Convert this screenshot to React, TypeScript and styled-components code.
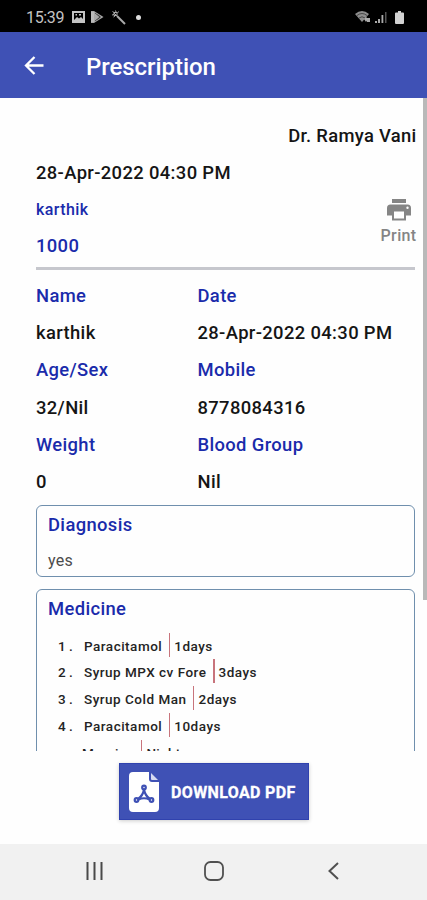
import React from "react";
import styled, { createGlobalStyle } from "styled-components";

const GlobalStyle = createGlobalStyle`
  * { box-sizing: border-box; }
  body { margin: 0; background: #fff; font-family: Roboto, "Liberation Sans", sans-serif; }
  svg { display: block; }
`;

const Screen = styled.div`
  width: 427px;
  height: 900px;
  display: flex;
  flex-direction: column;
  background: #fefefe;
  overflow: hidden;
  white-space: nowrap;
`;

const StatusBar = styled.div`
  height: 32px;
  flex: none;
  display: flex;
  align-items: center;
  justify-content: space-between;
  padding: 2px 23px 0 26px;
  background: #000;
  color: #c4c4c4;
`;

const StatusGroup = styled.div<{ $gap: number }>`
  display: flex;
  align-items: center;
  gap: ${(p) => p.$gap}px;
`;

const Clock = styled.span`
  font-size: 16px;
  letter-spacing: -0.35px;
  margin-right: 1px;
`;

const Dot = styled.i`
  width: 5px;
  height: 5px;
  margin-left: 4px;
  border-radius: 50%;
  background: #ddd;
`;

const AppBar = styled.header`
  height: 66px;
  flex: none;
  display: flex;
  align-items: center;
  padding-left: 24px;
  gap: 42px;
  background: #3f51b5;
  color: #fff;
`;

const Title = styled.h1`
  margin: 0;
  padding-top: 4px;
  font-size: 24px;
  line-height: 28px;
  font-weight: 500;
  letter-spacing: -0.05px;
`;

const Viewport = styled.main`
  height: 653px;
  flex: none;
  display: flex;
  overflow: hidden;
`;

const Content = styled.div`
  width: 379px;
  flex: none;
  margin: 19px 8px 0 36px;
`;

const ScrollThumb = styled.div`
  width: 4px;
  height: 502px;
  background: #b9b9b9;
`;

const Line = styled.div<{ $h?: number; $size?: number; $spacing?: number; $color?: string; $right?: boolean }>`
  height: ${(p) => p.$h ?? 37.33}px;
  line-height: ${(p) => p.$h ?? 37.33}px;
  font-size: ${(p) => p.$size ?? 18.4}px;
  letter-spacing: ${(p) => p.$spacing ?? 0.36}px;
  font-weight: 500;
  color: ${(p) => p.$color ?? "#151515"};
  ${(p) => p.$right && "display: flex; justify-content: flex-end; margin-right: -1.5px;"}
`;

const Summary = styled.section`
  display: flex;
  justify-content: space-between;
  height: 113px;
`;

const PrintButton = styled.button`
  display: flex;
  flex-direction: column;
  align-items: center;
  align-self: flex-start;
  margin: 45px -1.5px 0 0;
  padding: 0;
  border: 0;
  background: none;
  color: #858585;
  font: 500 16px/20px Roboto, sans-serif;
  letter-spacing: 0.35px;
  gap: 5px;
`;

const Divider = styled.hr`
  height: 3px;
  margin: 0 0 6.5px;
  border: 0;
  background: #c6c7cd;
`;

const Details = styled.section`
  display: grid;
  grid-template-columns: 161.5px 1fr;
`;

const Panel = styled.section<{ $height: number }>`
  height: ${(p) => p.$height}px;
  margin-bottom: 12px;
  padding: 5px 11px;
  border: 1px solid #6f8fad;
  border-radius: 6px;
`;

const Panels = styled.div`
  padding-top: 4.5px;
`;

const Diagnosis = styled.p`
  margin: 7px 0 0;
  color: #4c4c4c;
  font-size: 16px;
  line-height: 30px;
  letter-spacing: 0.25px;
`;

const MedicineList = styled.div`
  padding: 9px 0 0 10px;
`;

const Medicine = styled.div<{ $schedule?: boolean }>`
  display: flex;
  align-items: center;
  height: 26.75px;
  margin-left: ${(p) => (p.$schedule ? -2 : 0)}px;
  color: #242424;
  font-size: 13.5px;
  font-weight: 500;
  letter-spacing: ${(p) => (p.$schedule ? 0.3 : 0.5)}px;
`;

const Index = styled.span`
  width: 26px;
  word-spacing: -1px;
`;

const Separator = styled.i`
  width: 1.5px;
  height: 24px;
  margin: -2px 4px 0 6.5px;
  background: #c8747c;
`;

const Footer = styled.footer`
  height: 93px;
  flex: none;
  padding: 12px 0 0 119px;
`;

const Download = styled.button`
  width: 190px;
  height: 57px;
  display: flex;
  align-items: center;
  gap: 12px;
  padding: 0 0 0 10px;
  border: 0;
  background: #3f51b5;
  box-shadow: inset 0 0 0 1px #3042ae, 0 1px 4px #0003;
  color: #fff;
  font: 700 16px/20px Roboto, sans-serif;
  white-space: nowrap;
`;

const DownloadLabel = styled.span`
  padding-top: 2px;
  letter-spacing: 0.36px;
  -webkit-text-stroke: 0.3px #fff;
`;

const NavBar = styled.nav`
  height: 56px;
  flex: none;
  display: grid;
  grid-template-columns: repeat(3, 119.5px);
  align-items: center;
  justify-items: center;
  padding: 0 0 2px 35px;
  background: #f1f1f1;
`;

const BLUE = "#1a2bab";

const details: [string, string][] = [
  ["Name", "Date"],
  ["karthik", "28-Apr-2022 04:30 PM"],
  ["Age/Sex", "Mobile"],
  ["32/Nil", "8778084316"],
  ["Weight", "Blood Group"],
  ["0", "Nil"],
];

const medicines: [string, string, string][] = [
  ["1 .", "Paracitamol", "1days"],
  ["2 .", "Syrup MPX cv Fore", "3days"],
  ["3 .", "Syrup Cold Man", "2days"],
  ["4 .", "Paracitamol", "10days"],
  ["", "Morning", "Night"],
];

const ImageIcon = () => (
  <svg width="13" height="12" viewBox="0 0 13 12">
    <path fill="#c4c4c4" fillRule="evenodd" d="M0 0h13v12H0ZM2 2v7l3-3 2 1.500L9 6l2 2V2Z" />
    <path fill="#c4c4c4" d="M3.500 3h1.500v1.500H3.500zM7 3h2v1.500H7z" />
  </svg>
);

const PlayIcon = () => (
  <svg width="13" height="12" viewBox="0 0 13 12">
    <path fill="#a8a8a8" d="M0 0h3l9.500 6L3 12H0Z" />
    <path fill="none" stroke="#333" strokeWidth=".8" d="m4 2 5 4-5 4M6.500 3.500l3 2.500-3 2.500" />
    <path fill="#bbb" d="M0 1h3v10H0z" />
  </svg>
);

const WandIcon = () => (
  <svg width="15" height="15" viewBox="0 0 15 15" fill="none" stroke="#aaa">
    <path strokeWidth="1.900" d="m6 6 8 8" />
    <path strokeWidth="1" d="m1.500 1.500 1.500 1M4.500 .5l.5 1.500M7.500 1.500 6.500 3M1 5l2-.5M3 3l3 3M2.500 7l1.500-1M3 2.500h3v3H3z" />
  </svg>
);

const WifiIcon = () => (
  <svg width="16" height="14" viewBox="0 0 16 14">
    <path fill="#8d8d8d" d="M0 4Q7-2 14 4L7 12Z" />
    <path fill="none" stroke="#333" strokeWidth=".8" d="M2 5.500q5-4 10 0M4 8q3-2.500 6 0" />
    <path fill="#aaa" d="m9 9 2-2 2 2-2 3ZM12 8h3v4h-3z" />
  </svg>
);

const SignalIcon = () => (
  <svg width="12" height="12" viewBox="0 0 12 12">
    <path fill="#aaa" d="M0 10h2v2H0zM3 8h2v4H3zM6.500 4h1.800v8H6.500z" />
    <path fill="#555" d="M10 1h1.500v11H10z" />
  </svg>
);

const BatteryIcon = () => (
  <svg width="9" height="13" viewBox="0 0 9 13">
    <path fill="#d2d2d2" d="M3 0h3v1.500h2q1 0 1 1V12q0 1-1 1H1q-1 0-1-1V2.500q0-1 1-1h2Z" />
  </svg>
);

const BackIcon = () => (
  <svg width="20" height="19" viewBox="0 0 20 19" fill="none" stroke="#fff" strokeWidth="2.300">
    <path d="M19.500 9.500H2.500M10.500 1 2 9.500l8.500 8.500" />
  </svg>
);

const PrinterIcon = () => (
  <svg width="24" height="22" viewBox="0 0 24 22">
    <path fill="#858585" d="M5 0h14v4H5z" />
    <path fill="#858585" fillRule="evenodd" d="M3.500 5.500h17Q24 5.500 24 9v7.500h-5V21.500H5v-5H0V9q0-3.500 3.500-3.500ZM7 12.500v7h10v-7Zm13.500-5a1.200 1.200 0 1 0 0 2.400 1.200 1.200 0 0 0 0-2.400Z" />
  </svg>
);

const PdfIcon = () => (
  <svg width="30" height="40" viewBox="0 0 30 40">
    <path fill="#fff" d="M4 0h16v7q0 3 3 3h7v26q0 4-4 4H4q-4 0-4-4V4q0-4 4-4Z" />
    <path fill="#d6daf2" d="m22 1 7 7h-6q-1 0-1-1Z" />
    <g fill="none" stroke="#3f51b5" strokeWidth="2.200">
      <circle cx="15" cy="15.500" r="1.800" />
      <circle cx="7.500" cy="28" r="1.800" />
      <circle cx="22.500" cy="28" r="1.800" />
      <path d="M15 17.500q-1 6-6 9.500M15 17.500q1 6 6 9.500M9.500 27.500q5.500-2.500 11 0" />
    </g>
  </svg>
);

export default function App() {
  return (
    <>
      <GlobalStyle />
      <Screen>
        <StatusBar>
          <StatusGroup $gap={6.5}>
            <Clock>15:39</Clock>
            <ImageIcon />
            <PlayIcon />
            <WandIcon />
            <Dot />
          </StatusGroup>
          <StatusGroup $gap={4}>
            <WifiIcon />
            <SignalIcon />
            <i />
            <BatteryIcon />
          </StatusGroup>
        </StatusBar>
        <AppBar>
          <BackIcon />
          <Title>Prescription</Title>
        </AppBar>
        <Viewport>
          <Content>
            <Line $right $spacing={0.3}>Dr. Ramya Vani</Line>
            <Summary>
              <div>
                <Line $h={38}>28-Apr-2022 04:30 PM</Line>
                <Line $h={35} $size={16} $spacing={0.4} $color={BLUE}>karthik</Line>
                <Line $h={37} $color={BLUE}>1000</Line>
              </div>
              <PrintButton>
                <PrinterIcon />
                Print
              </PrintButton>
            </Summary>
            <Divider />
            <Details>
              {details.map((pair, row) =>
                pair.map((text) => (
                  <Line key={`${row}-${text}`} $color={row % 2 === 0 ? BLUE : undefined}>
                    {text}
                  </Line>
                )),
              )}
            </Details>
            <Panels>
              <Panel $height={72}>
                <Line $h={28} $color={BLUE}>Diagnosis</Line>
                <Diagnosis>yes</Diagnosis>
              </Panel>
              <Panel $height={240}>
                <Line $h={28} $color={BLUE}>Medicine</Line>
                <MedicineList>
                  {medicines.map(([index, name, days], i) => (
                    <Medicine key={i} $schedule={index === ""}>
                      <Index>{index}</Index>
                      <span>{name}</span>
                      <Separator />
                      <span>{days}</span>
                    </Medicine>
                  ))}
                </MedicineList>
              </Panel>
            </Panels>
          </Content>
          <ScrollThumb />
        </Viewport>
        <Footer>
          <Download>
            <PdfIcon />
            <DownloadLabel>DOWNLOAD PDF</DownloadLabel>
          </Download>
        </Footer>
        <NavBar>
          <svg width="19" height="18" viewBox="0 0 19 18" stroke="#4a4a4a" strokeWidth="2">
            <path d="M2.500 0v18M9.500 0v18M16.500 0v18" />
          </svg>
          <svg width="20" height="20" viewBox="0 0 20 20" fill="none" stroke="#505050" strokeWidth="1.800">
            <rect x="1" y="1" width="18" height="18" rx="5.500" />
          </svg>
          <svg width="11" height="18" viewBox="0 0 11 18" fill="none" stroke="#505050" strokeWidth="2">
            <path d="M10 1 1.500 9l8.500 8" />
          </svg>
        </NavBar>
      </Screen>
    </>
  );
}
